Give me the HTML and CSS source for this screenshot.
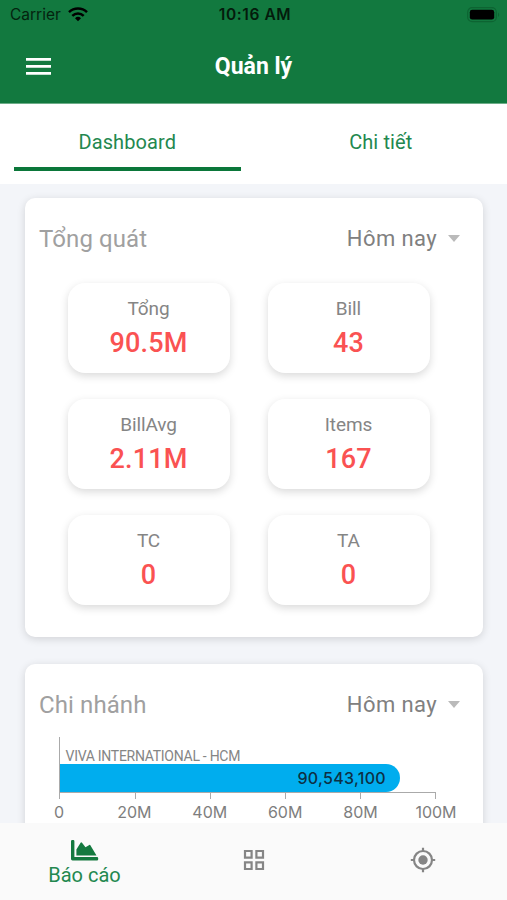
FILE: index.html
```html
<!DOCTYPE html>
<html lang="vi">
<head>
    <meta charset="UTF-8">
    <meta name="viewport" content="width=device-width, initial-scale=1">
    <title>Quản lý</title>
    <link rel="stylesheet" href="styles.css">
</head>
<body>

<div class="app">
    <header class="header">
        <div class="status">
            <div class="carrier">
                <span>Carrier</span>
                <svg width="20" height="15" viewBox="0 0 20 15" fill="none" stroke="#000" stroke-width="2.5">
                    <path d="M1 5.2a13 13 0 0 1 18 0"/>
                    <path d="M4.3 8.8a8.2 8.2 0 0 1 11.4 0"/>
                    <path d="M7 11.2a4.3 4.3 0 0 1 6 0L10 14.2z" fill="#000" stroke="none"/>
                </svg>
            </div>
            <span class="clock">10:16 AM</span>
            <div class="battery">
                <svg width="33" height="16" viewBox="0 0 33 16">
                    <rect x="0.7" y="0.7" width="28.6" height="14" rx="4.5" fill="none" stroke="#0d6432" stroke-width="1.2"/>
                    <rect x="2.8" y="2.8" width="24.4" height="9.8" rx="2.4"/>
                    <path d="M31 5.5c1.6.8 1.6 3.6 0 4.4z" fill="#0d6432"/>
                </svg>
            </div>
        </div>
        <div class="titlebar">
            <svg class="menu" width="25" height="17" viewBox="0 0 25 17" fill="#fff">
                <path d="M0 0h25v2.8H0zM0 7h25v2.8H0zM0 14h25v2.8H0z"/>
            </svg>
            <h1>Quản lý</h1>
        </div>
    </header>

    <nav class="tabs">
        <a class="tab active">Dashboard</a>
        <a class="tab">Chi tiết</a>
    </nav>

    <main class="content">
        <section class="card">
            <div class="card-head">
                <h2>Tổng quát</h2>
                <div class="period">Hôm nay <span class="caret"></span></div>
            </div>
            <div class="stats">
                <div class="stat"><span>Tổng</span><b>90.5M</b></div>
                <div class="stat"><span>Bill</span><b>43</b></div>
                <div class="stat"><span>BillAvg</span><b>2.11M</b></div>
                <div class="stat"><span>Items</span><b>167</b></div>
                <div class="stat"><span>TC</span><b>0</b></div>
                <div class="stat"><span>TA</span><b>0</b></div>
            </div>
        </section>

        <section class="card">
            <div class="card-head">
                <h2>Chi nhánh</h2>
                <div class="period">Hôm nay <span class="caret"></span></div>
            </div>
            <div class="chart">
                <div class="plot">
                    <div class="bar-name">VIVA INTERNATIONAL - HCM</div>
                    <div class="bar" style="width: 90.54%">90,543,100</div>
                </div>
                <div class="ticks"><i></i><i></i><i></i><i></i><i></i></div>
                <div class="labels">
                    <span>0</span><span>20M</span><span>40M</span><span>60M</span><span>80M</span><span>100M</span>
                </div>
            </div>
        </section>
    </main>

    <footer class="bottom-nav">
        <a class="nav-item active">
            <svg width="28" height="21" viewBox="0 0 28 21" fill="#14793f">
                <path d="M0 1.2Q0 0 1.2 0h1Q3.4 0 3.4 1.2V17H26q1.2 0 1.2 1.2v1q0 1.2-1.2 1.2H1.5Q0 20.4 0 19z"/>
                <path d="M5.4 15.5V9.500L9.6 2.800q.7-1 1.400 0L14.500 7.300l3.800-2.300q.8-.4 1.200.4L25.500 15.500z"/>
            </svg>
            <span>Báo cáo</span>
        </a>
        <a class="nav-item">
            <svg width="22" height="22" viewBox="0 0 22 22" fill="none" stroke="#858585" stroke-width="2.2">
                <path d="M2 2h6.600v6.600H2zM13.400 2H20v6.600h-6.600zM2 13.400h6.600V20H2zM13.400 13.400H20V20h-6.600z"/>
            </svg>
        </a>
        <a class="nav-item">
            <svg width="26" height="26" viewBox="0 0 26 26" fill="none" stroke="#858585" stroke-width="2.2">
                <circle cx="13" cy="13" r="9"/>
                <circle cx="13" cy="13" r="4.700" fill="#858585" stroke="none"/>
                <path d="M13 .8V4M13 22v3.200M.8 13H4M22 13h3.200"/>
            </svg>
        </a>
    </footer>
</div>

</body>
</html>
```
FILE: styles.css
```css
* {
    box-sizing: border-box;
}
body {
    margin: 0;
    font-family: Roboto, sans-serif;
    background: #f3f5f9;
}
h1, h2 {
    margin: 0;
}
svg {
    display: block;
}
.app {
    height: 900px;
    display: flex;
    flex-direction: column;
    overflow: hidden;
}

/* header */
.header {
    height: 104px;
    flex: none;
    background: #12793f;
    border-bottom: 1px solid #6dad88;
}
.status {
    height: 29px;
    padding: 0 7px 0 10px;
    display: grid;
    grid-template-columns: 1fr auto 1fr;
    align-items: center;
    font-family: Inter, sans-serif;
    font-size: 15.5px;
    color: #04230f;
}
.carrier {
    display: flex;
    align-items: center;
    gap: 7px;
}
.clock {
    font-weight: 600;
    font-size: 15.5px;
    letter-spacing: 0.6px;
    color: #041b0c;
}
.battery {
    display: flex;
    justify-content: flex-end;
}
.titlebar {
    height: 74px;
    padding: 0 26px;
    display: grid;
    grid-template-columns: 1fr auto 1fr;
    align-items: center;
}
.titlebar h1 {
    font-size: 23px;
    font-weight: 700;
    color: #fff;
}

/* tabs */
.tabs {
    height: 80px;
    flex: none;
    display: grid;
    grid-template-columns: 1fr 1fr;
    padding-bottom: 13px;
    background: #fff;
}
.tab {
    margin: 0 13px 0 14px;
    padding-top: 26px;
    font-size: 20px;
    line-height: 24px;
    letter-spacing: 0.1px;
    text-align: center;
    color: #23884f;
}
.tab.active {
    border-bottom: 4px solid #0b773a;
}

/* cards */
.content {
    flex: 1;
    min-height: 0;
    padding: 14px 24px 0 25px;
    overflow: hidden;
}
.card {
    height: 439px;
    margin-bottom: 27px;
    padding: 22px 23px 0 14px;
    background: #fff;
    border-radius: 10px;
    box-shadow: 0 2px 9px rgba(0,0,0,0.14);
}
.card-head {
    display: flex;
    justify-content: space-between;
    align-items: center;
    height: 38px;
}
.card-head h2 {
    font-size: 24px;
    font-weight: 400;
    letter-spacing: 0.1px;
    color: #a0a0a0;
}
.period {
    display: flex;
    align-items: center;
    gap: 11px;
    margin-top: -2px;
    font-size: 22px;
    letter-spacing: 0.4px;
    color: #808080;
}
.caret {
    border: 6.5px solid transparent;
    border-top: 7px solid #bababa;
    border-bottom: 0;
}
.stats {
    display: grid;
    grid-template-columns: 162px 162px;
    gap: 26px 38px;
    padding: 25px 0 0 28.5px;
}
.stat {
    height: 90px;
    padding-top: 14px;
    display: flex;
    flex-direction: column;
    align-items: center;
    border-radius: 17px;
    background: #fff;
    box-shadow: 0 3px 8px rgba(0,0,0,0.15);
}
.stat span {
    font-size: 19px;
    line-height: 24px;
    letter-spacing: -0.1px;
    color: #858585;
}
.stat b {
    margin-top: 5px;
    font-size: 27px;
    font-weight: 500;
    line-height: 34px;
    letter-spacing: 0.2px;
    color: #fa5252;
}

/* chart */
.chart {
    width: 377px;
    margin: 13px 0 0 19.5px;
}
.plot {
    height: 55px;
    border-left: 1px solid #aaa;
}
.bar-name {
    padding: 11px 0 0 6px;
    font-size: 14px;
    line-height: 16px;
    letter-spacing: -0.28px;
    color: #858585;
}
.bar {
    height: 28px;
    padding-right: 14px;
    border-radius: 0 14px 14px 0;
    background: #00adee;
    font-family: Inter, sans-serif;
    font-size: 16px;
    font-weight: 500;
    line-height: 28px;
    letter-spacing: 0.3px;
    text-align: right;
    color: #0d3044;
}
.ticks {
    height: 7px;
    display: grid;
    grid-template-columns: repeat(5, 1fr);
    border: 1px solid #aaa;
    border-bottom: 0;
}
.ticks i + i {
    border-left: 1px solid #aaa;
}
.labels {
    display: grid;
    grid-template-columns: repeat(6, 75.4px);
    margin: 3px 0 0 -37.2px;
    font-family: Inter, sans-serif;
    font-size: 16px;
    line-height: 20px;
    text-align: center;
    color: #7e7e7e;
}

/* bottom navigation */
.bottom-nav {
    height: 77px;
    flex: none;
    display: grid;
    grid-template-columns: repeat(3, 1fr);
    padding-bottom: 3px;
    background: #fafafa;
}
.nav-item {
    display: flex;
    flex-direction: column;
    align-items: center;
    justify-content: center;
    font-size: 20px;
    line-height: 24px;
    color: #23884f;
}
.nav-item.active {
    padding-top: 6px;
}
.nav-item span {
    margin-top: 2px;
}
```
